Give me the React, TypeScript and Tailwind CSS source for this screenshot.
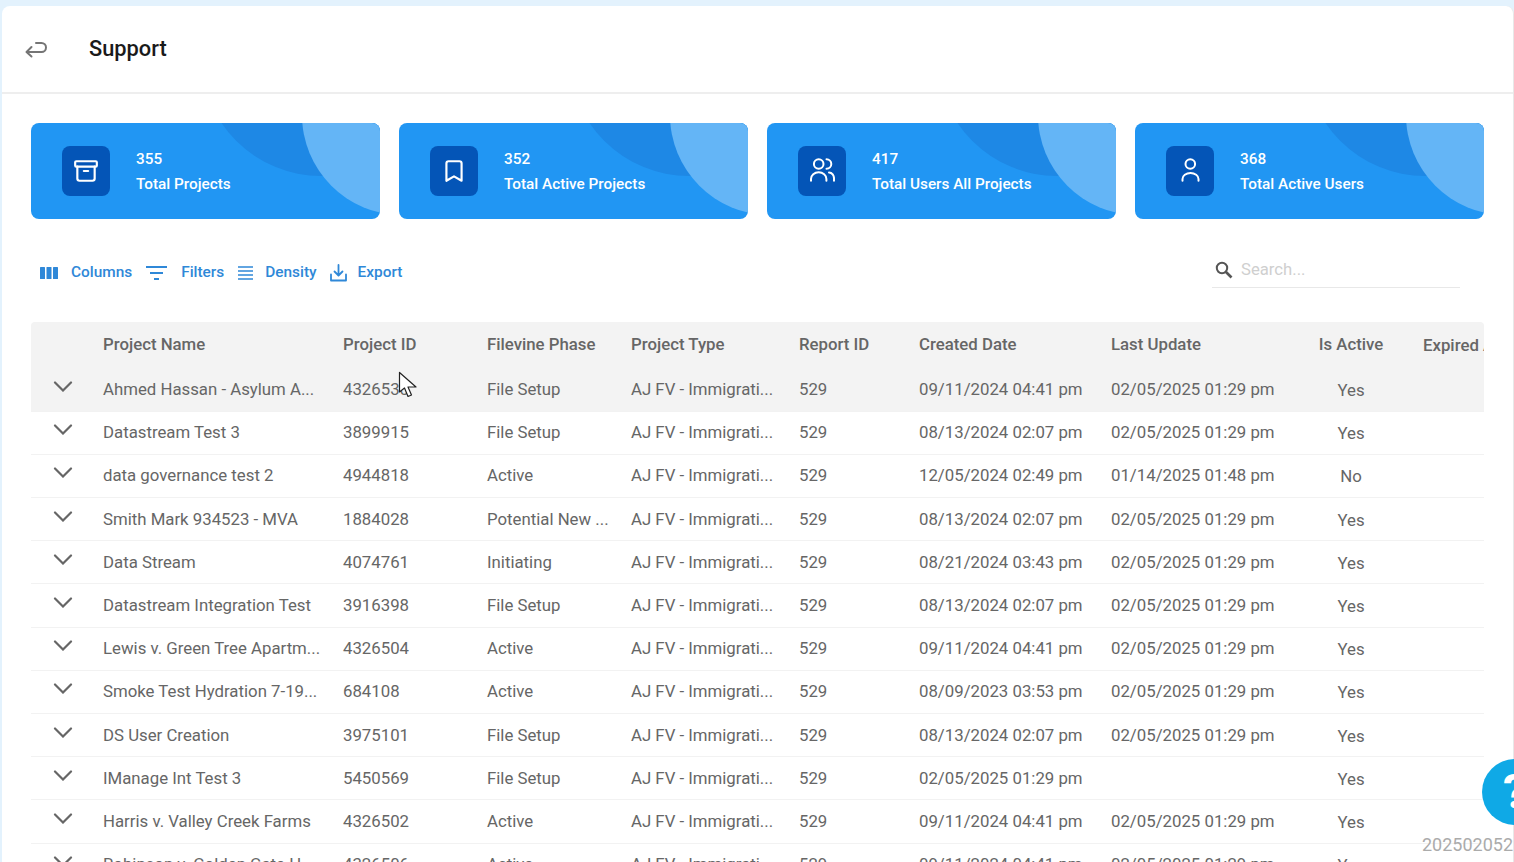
import React from 'react';
import { Archive, Bookmark } from 'lucide-react';

const UsersIcon = () => (
  <svg width="26" height="26" viewBox="-13 -13 26 26" fill="none" stroke="#fff" strokeWidth="2" strokeLinecap="round">
    <circle cx="-3.3" cy="-7" r="4.8" />
    <path d="M-11 9.7V8a7.7 6.7 0 0 1 15.4 0V9.7" />
    <path d="M4.5-11.8a4.8 4.8 0 0 1 0 9.6" />
    <path d="M7 1.5a5 6 0 0 1 5 6.5V9.7" />
  </svg>
);

const UserIcon = () => (
  <svg width="26" height="26" viewBox="-13 -13 26 26" fill="none" stroke="#fff" strokeWidth="2" strokeLinecap="round">
    <circle cx="0.3" cy="-7" r="4.8" />
    <path d="M-7.5 9.7V8a8 6 0 0 1 16 0V9.7" />
  </svg>
);

const stats = [
  { value: '355', label: 'Total Projects', icon: <Archive size={26} strokeWidth={2} color="#fff" /> },
  { value: '352', label: 'Total Active Projects', icon: <Bookmark size={26} strokeWidth={2} color="#fff" /> },
  { value: '417', label: 'Total Users All Projects', icon: <UsersIcon /> },
  { value: '368', label: 'Total Active Users', icon: <UserIcon /> },
];

const type = 'AJ FV - Immigrati...';

const rows = [
  ['Ahmed Hassan - Asylum A...', '4326530', 'File Setup', '09/11/2024 04:41 pm', '02/05/2025 01:29 pm', 'Yes'],
  ['Datastream Test 3', '3899915', 'File Setup', '08/13/2024 02:07 pm', '02/05/2025 01:29 pm', 'Yes'],
  ['data governance test 2', '4944818', 'Active', '12/05/2024 02:49 pm', '01/14/2025 01:48 pm', 'No'],
  ['Smith Mark 934523 - MVA', '1884028', 'Potential New ...', '08/13/2024 02:07 pm', '02/05/2025 01:29 pm', 'Yes'],
  ['Data Stream', '4074761', 'Initiating', '08/21/2024 03:43 pm', '02/05/2025 01:29 pm', 'Yes'],
  ['Datastream Integration Test', '3916398', 'File Setup', '08/13/2024 02:07 pm', '02/05/2025 01:29 pm', 'Yes'],
  ['Lewis v. Green Tree Apartm...', '4326504', 'Active', '09/11/2024 04:41 pm', '02/05/2025 01:29 pm', 'Yes'],
  ['Smoke Test Hydration 7-19...', '684108', 'Active', '08/09/2023 03:53 pm', '02/05/2025 01:29 pm', 'Yes'],
  ['DS User Creation', '3975101', 'File Setup', '08/13/2024 02:07 pm', '02/05/2025 01:29 pm', 'Yes'],
  ['IManage Int Test 3', '5450569', 'File Setup', '02/05/2025 01:29 pm', '', 'Yes'],
  ['Harris v. Valley Creek Farms', '4326502', 'Active', '09/11/2024 04:41 pm', '02/05/2025 01:29 pm', 'Yes'],
  ['Robinson v. Golden Gate H...', '4326506', 'Active', '09/11/2024 04:41 pm', '02/05/2025 01:29 pm', 'Yes'],
];

const Chevron = () => (
  <svg width="20" height="11" viewBox="0 0 20 11" fill="none" stroke="#666" strokeWidth="2.2" strokeLinecap="round" className="block">
    <path d="M2 1.5 10 9.5 18 1.5" />
  </svg>
);

const App: React.FC = () => {
  return (
    <div className="h-screen overflow-hidden bg-[#e3f2fd] pl-[2px] pt-[6px] font-['Roboto',sans-serif] relative">
      <div className="h-[900px] bg-white rounded-tl-lg rounded-tr-lg border-r border-[#e8e8e8]">
        {/* Title bar */}
        <div className="h-[88px] flex items-center border-b-2 border-[#eeeeee]">
          <svg width="24" height="20" viewBox="0 0 24 20" fill="none" stroke="#757575" strokeWidth="2" strokeLinecap="round" strokeLinejoin="round" className="ml-[22px]">
            <path d="M7.5 8 2.5 13 7.5 17.5" />
            <path d="M3 13H17.5a4.5 4.5 0 0 0 0-9H12" />
          </svg>
          <h1 className="ml-[41px] text-[21.8px] font-medium text-[#1a1a1a] leading-none">Support</h1>
        </div>

        <div className="pl-[29px] w-[1482px]">
          {/* Stat cards */}
          <div className="mt-[29px] grid grid-cols-4 gap-[19px]">
            {stats.map((s) => (
              <div key={s.label} className="relative h-[96px] rounded-lg bg-[#2196f3] overflow-hidden flex items-center pl-[31px]">
                <div className="absolute left-[170px] top-[-187px] w-[240px] h-[240px] rounded-full bg-[#1e88e5]" />
                <div className="absolute left-[271px] top-[-108px] w-[200px] h-[200px] rounded-full bg-[#64b5f6]" />
                <div className="relative w-[48px] h-[50px] rounded-lg bg-[#0455b7] flex items-center justify-center">
                  {s.icon}
                </div>
                <div className="relative ml-[26px] pt-[2px] text-white font-medium text-[15.3px] leading-none">
                  <div className="mb-[10px]">{s.value}</div>
                  <div>{s.label}</div>
                </div>
              </div>
            ))}
          </div>

          {/* Toolbar */}
          <div className="mt-[32px] mb-[27px] h-[44px] flex items-center justify-between text-[#2f88d8] text-[15.4px] font-medium">
            <div className="flex items-center pl-[9px]">
              <svg width="18" height="14" viewBox="0 0 18 14" fill="#2f88d8"><rect x="0" y="1" width="5" height="12" rx="0.5" /><rect x="6.5" y="1" width="5" height="12" rx="0.5" /><rect x="13" y="1" width="5" height="12" rx="0.5" /></svg>
              <span className="ml-[13px]">Columns</span>
              <svg width="21" height="16" viewBox="0 0 21 16" fill="none" stroke="#2f88d8" strokeWidth="2" className="ml-[14px]"><path d="M0 2H21M4 8H17M8 14H13" /></svg>
              <span className="ml-[14px]">Filters</span>
              <svg width="15" height="14" viewBox="0 0 15 14" fill="none" stroke="#2f88d8" strokeWidth="1.5" className="ml-[14px]"><path d="M0 1H15M0 5H15M0 9H15M0 13H15" /></svg>
              <span className="ml-[12px]">Density</span>
              <svg width="17" height="18" viewBox="0 0 17 18" fill="none" stroke="#2f88d8" strokeWidth="1.8" strokeLinecap="round" strokeLinejoin="round" className="ml-[13px]"><path d="M8.5 1v10M4.5 7.5 8.5 11.5 12.5 7.5M1 10.5V16.5H16V10.5" /></svg>
              <span className="ml-[11px]">Export</span>
            </div>
            <label className="mr-[24px] mb-[5px] w-[248px] h-[34px] border-b border-[#e8e8e8] flex items-center pl-[3px] font-normal">
              <svg width="18" height="18" viewBox="0 0 18 18" fill="none" stroke="#555" className="shrink-0">
                <circle cx="7" cy="7" r="5.2" strokeWidth="2" />
                <path d="M11 11 16.5 16.5" strokeWidth="2.6" />
              </svg>
              <input placeholder="Search..." className="ml-[8px] w-[200px] text-[16.7px] outline-none placeholder:text-[#cfcfcf]" />
            </label>
          </div>

          {/* Table */}
          <table className="w-[1453px] table-fixed border-collapse text-[16.8px] text-[#666666]">
            <colgroup>
              <col className="w-[56px]" />
              <col className="w-[240px]" />
              <col className="w-[144px]" />
              <col className="w-[144px]" />
              <col className="w-[168px]" />
              <col className="w-[120px]" />
              <col className="w-[192px]" />
              <col className="w-[208px]" />
              <col className="w-[96px]" />
              <col className="w-[85px]" />
            </colgroup>
            <thead>
              <tr className="h-[46px] bg-[#f3f3f3] font-medium">
                <th className="rounded-tl" />
                <th className="pl-[16px] text-left font-medium">Project Name</th>
                <th className="pl-[16px] text-left font-medium">Project ID</th>
                <th className="pl-[16px] text-left font-medium">Filevine Phase</th>
                <th className="pl-[16px] text-left font-medium">Project Type</th>
                <th className="pl-[16px] text-left font-medium">Report ID</th>
                <th className="pl-[16px] text-left font-medium">Created Date</th>
                <th className="pl-[16px] text-left font-medium">Last Update</th>
                <th className="text-center font-medium whitespace-nowrap">Is Active</th>
                <th className="pl-[24px] pt-[2px] text-left font-medium whitespace-nowrap overflow-hidden rounded-tr">Expired At</th>
              </tr>
            </thead>
            <tbody>
              {rows.map((r, i) => (
                <tr key={r[1]} className={`h-[43.2px] border-b border-[#f2f2f2] ${i === 0 ? 'bg-[#f3f3f3]' : ''}`}>
                  <td className="pl-[22px] pb-[6px]"><Chevron /></td>
                  <td className="pl-[16px] whitespace-nowrap">{r[0]}</td>
                  <td className="pl-[16px]">{r[1]}</td>
                  <td className="pl-[16px] whitespace-nowrap">{r[2]}</td>
                  <td className="pl-[16px] whitespace-nowrap">{type}</td>
                  <td className="pl-[16px]">529</td>
                  <td className="pl-[16px] whitespace-nowrap">{r[3]}</td>
                  <td className="pl-[16px] whitespace-nowrap">{r[4]}</td>
                  <td className="pt-[2px] text-center">{r[5]}</td>
                  <td />
                </tr>
              ))}
            </tbody>
          </table>
        </div>
      </div>

      {/* Mouse pointer */}
      <svg width="20" height="28" viewBox="0 0 20 28" className="absolute left-[398px] top-[371px]">
        <path d="M1.5 1.5V21L6.5 17 10 25.5 13.5 24 10 16H18Z" fill="#fff" stroke="#222" strokeWidth="1.2" strokeLinejoin="round" />
      </svg>

      {/* Help button */}
      <div className="absolute left-[1482px] top-[759px] w-[66px] h-[66px] rounded-full bg-[#0fa9e6] flex items-center pl-[21px] text-white text-[48px] font-bold leading-none">?</div>

      <div className="absolute right-0 top-[834px] w-[92px] overflow-hidden whitespace-nowrap text-[18px] leading-[22px] text-[#ababab]">202502052</div>
    </div>
  );
};

export default App;
